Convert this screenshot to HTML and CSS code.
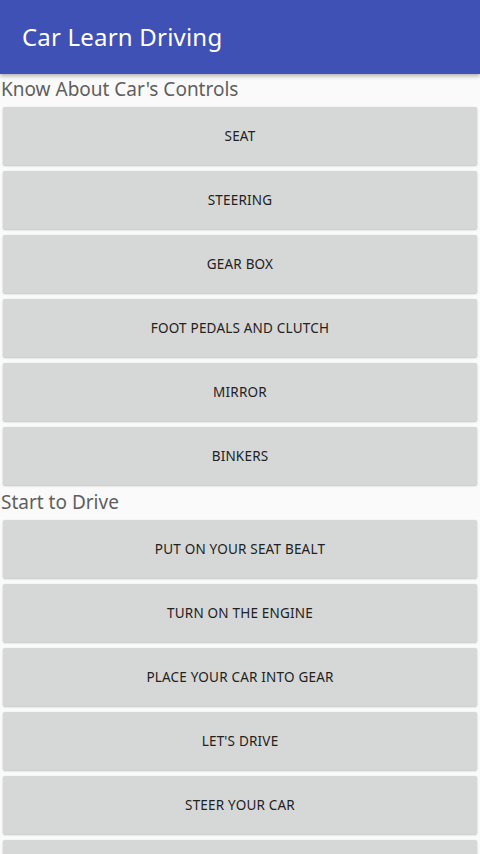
FILE: index.html
```html
<!DOCTYPE html>
<html>
<head>
<meta charset="utf-8">
<link rel="stylesheet" href="styles.css">
</head>
<body>
<header class="appbar"><span class="appbar-title">Car Learn Driving</span></header>
<main class="content">
  <section class="section">
    <h2 class="section-title">Know About Car's Controls</h2>
    <div class="list">
      <button class="btn">SEAT</button>
      <button class="btn">STEERING</button>
      <button class="btn">GEAR BOX</button>
      <button class="btn">FOOT PEDALS AND CLUTCH</button>
      <button class="btn">MIRROR</button>
      <button class="btn">BINKERS</button>
    </div>
  </section>
  <section class="section">
    <h2 class="section-title">Start to Drive</h2>
    <div class="list">
      <button class="btn">PUT ON YOUR SEAT BEALT</button>
      <button class="btn">TURN ON THE ENGINE</button>
      <button class="btn">PLACE YOUR CAR INTO GEAR</button>
      <button class="btn">LET'S DRIVE</button>
      <button class="btn">STEER YOUR CAR</button>
      <button class="btn" aria-label="more"></button>
    </div>
  </section>
</main>
</body>
</html>
```
FILE: styles.css
```css
html, body {
  margin: 0;
  padding: 0;
  height: 854px;
  overflow: hidden;
  background: #fafafa;
  font-family: "Noto Sans", "DejaVu Sans", sans-serif;
}
.appbar {
  position: relative;
  z-index: 2;
  height: 74px;
  background: #3f51b5;
  display: flex;
  align-items: center;
  padding-left: 22px;
  box-shadow: 0 2px 4px rgba(0,0,0,0.3);
}
.appbar-title {
  color: #ffffff;
  font-size: 24px;
  letter-spacing: 0.2px;
  margin-top: -2px;
}
.content {
  display: flex;
  flex-direction: column;
}
.section-title {
  margin: 0;
  height: 31px;
  line-height: 31px;
  font-size: 19px;
  font-weight: normal;
  color: #5f5f5f;
  padding-left: 1px;
}
.list {
  display: flex;
  flex-direction: column;
  gap: 6px;
  padding: 2px 3px;
}
.btn {
  height: 58px;
  flex: none;
  border: none;
  border-radius: 2px;
  background: #d6d7d7;
  box-shadow: 0 1px 2px rgba(0,0,0,0.22), 0 0 1px rgba(0,0,0,0.1);
  font-family: "Noto Sans", "DejaVu Sans", sans-serif;
  font-size: 13.5px;
  color: #222222;
  letter-spacing: 0.2px;
  padding: 0;
}
```
